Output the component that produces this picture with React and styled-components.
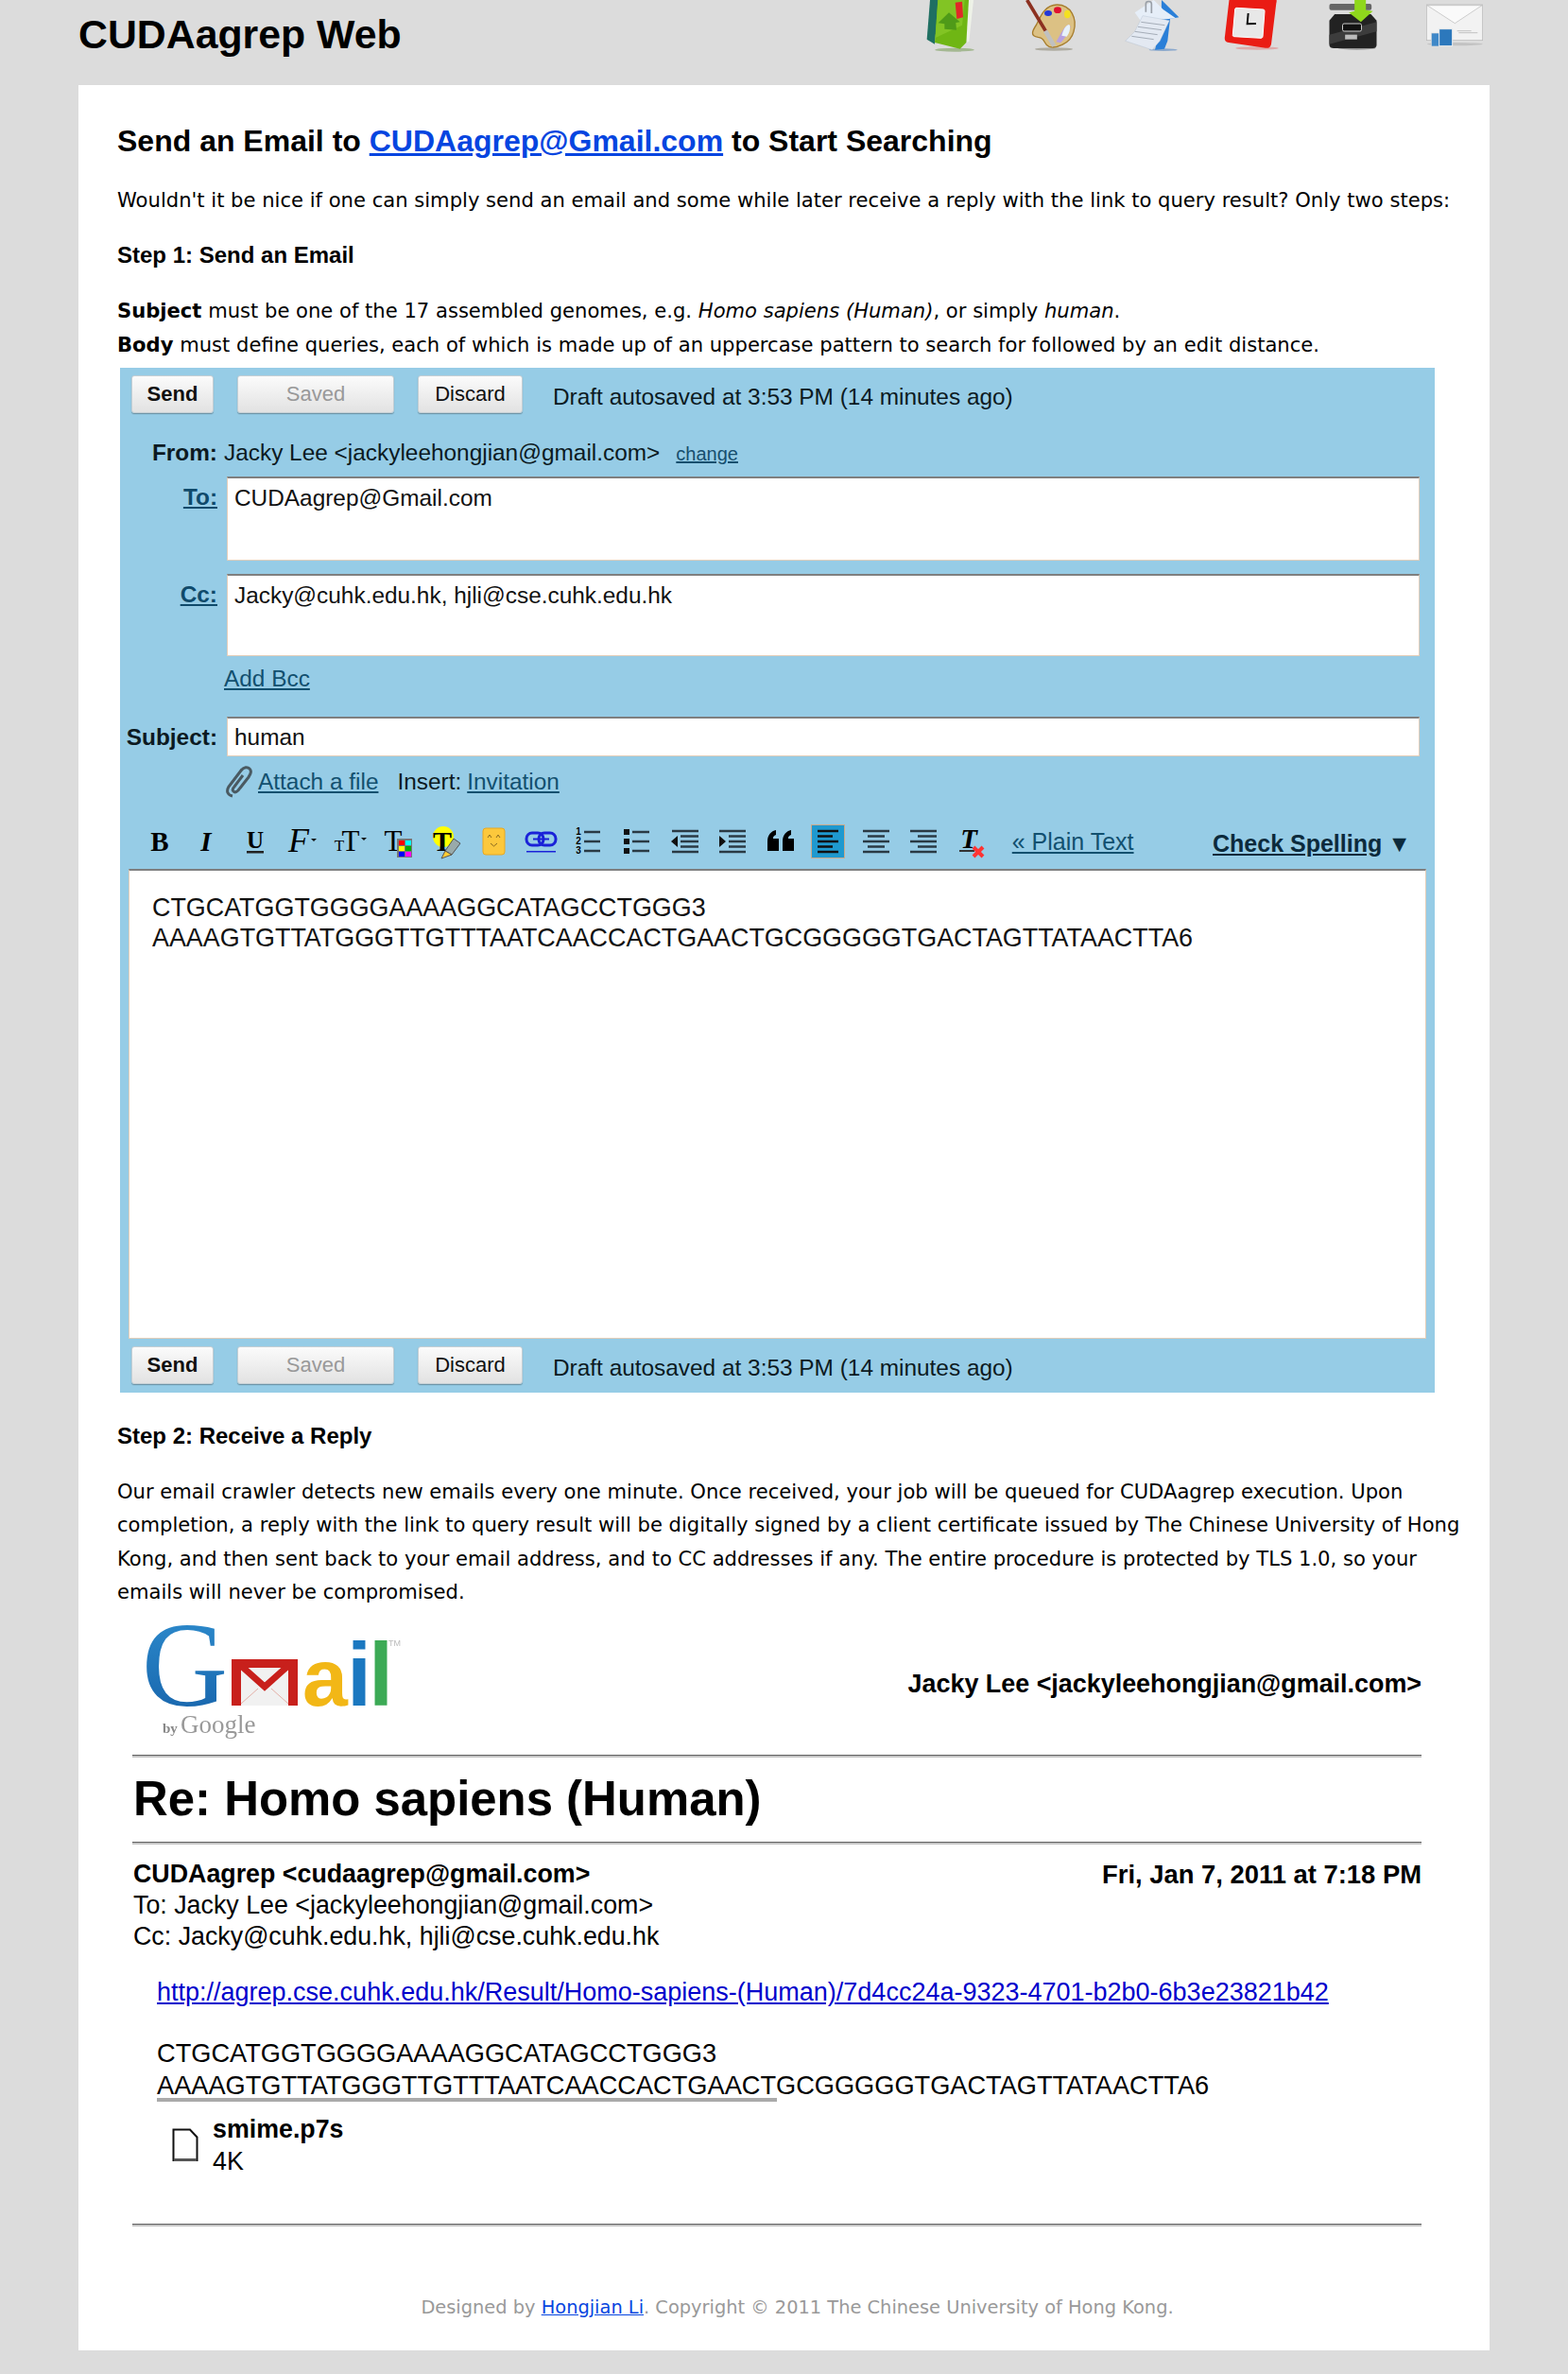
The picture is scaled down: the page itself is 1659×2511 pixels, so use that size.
import React from 'react';
import styled, { createGlobalStyle } from 'styled-components';

const GlobalStyle = createGlobalStyle`
  html, body { margin: 0; padding: 0; background: #dcdcdc; }
  body { font-family: "DejaVu Sans", Verdana, sans-serif; color: #000; }
`;

const Page = styled.div`
  width: 1493px;
  margin-left: 83px;
  padding-bottom: 26px;
`;

const Header = styled.header`
  height: 90px;
  display: flex;
  justify-content: space-between;
  align-items: flex-start;
  overflow: hidden;
`;

const SiteTitle = styled.h1`
  margin: 12px 0 0;
  font: bold 42.8px/48px "Liberation Sans", Arial, sans-serif;
`;

const NavIcons = styled.nav`
  display: flex;
  gap: 30.5px;
`;

const NavIcon = styled.svg`
  width: 76px;
  height: 56px;
  display: block;
  filter: blur(0.3px);
`;

const Card = styled.main`
  background: #fff;
  padding: 39px 26px 30px 41px;
`;

const Title = styled.h2`
  margin: 0 0 25px;
  font: bold 32px/40px "Liberation Sans", Arial, sans-serif;

  a { color: #0645e0; }
`;

const Text = styled.p`
  margin: 0 0 ${(p) => p.$gap}px;
  font-size: 21.1px;
  line-height: ${(p) => p.$line}px;
`;

const StepTitle = styled.h3`
  margin: 0 0 23px;
  font: bold 24px/36px "Liberation Sans", Arial, sans-serif;
`;

const Rules = styled.p`
  margin: 0 0 6px;
  font-size: 21.1px;
  line-height: 36px;
`;

/* the compose window */
const Compose = styled.section`
  width: 1391px;
  margin: 0 0 28px 3px;
  padding: 8px 0 9px;
  background: #96cce6;
  font: 24.4px/32px "Liberation Sans", Arial, sans-serif;
  color: #0c1a22;
`;

const ButtonBar = styled.div`
  display: flex;
  align-items: center;
  gap: 25px;
  margin-left: 12px;
`;

const Button = styled.div`
  width: ${(p) => p.$w}px;
  height: 40px;
  box-sizing: border-box;
  display: flex;
  align-items: center;
  justify-content: center;
  border: 1px solid #c3ced4;
  border-radius: 3px;
  background: linear-gradient(#fbfbfb, #e2e2e2);
  box-shadow: 0 1px 1px rgba(0, 0, 0, 0.3);
  font-size: 22px;
  font-weight: ${(p) => (p.$bold ? 'bold' : 'normal')};
  color: ${(p) => (p.$muted ? '#999' : '#111')};
`;

const Status = styled.span`
  margin: 6px 0 0 7px;
`;

const Field = styled.div`
  display: grid;
  grid-template-columns: 103px 1262px;
  column-gap: 10px;
  margin-top: ${(p) => p.$top}px;
`;

const Label = styled.label`
  text-align: right;
  font-weight: bold;
  margin-top: ${(p) => p.$offset || 0}px;
  text-decoration: ${(p) => (p.$link ? 'underline' : 'none')};
  color: ${(p) => (p.$link ? '#0f4a6b' : '#0c1a22')};
`;

const FromValue = styled.div`
  margin-left: -3px;
  white-space: nowrap;
`;

const Change = styled.a`
  margin-left: 17px;
  font-size: 20px;
  color: #174f6e;
  text-decoration: underline;
`;

const Input = styled.div`
  height: ${(p) => p.$h}px;
  box-sizing: border-box;
  padding: ${(p) => p.$pad || 5}px 7px 0;
  background: #fff;
  border: 1px solid #e2cdb9;
  border-top: 2px solid #7f7f7f;
  color: #111;
`;

const Links = styled.div`
  display: flex;
  align-items: center;
  margin: ${(p) => p.$top}px 0 0 110px;
  height: 28px;
`;

const PlainLink = styled.a`
  color: #12506f;
  text-decoration: underline;
`;

const Clip = styled.svg`
  width: 32px;
  height: 34px;
  margin-right: 4px;
  flex: none;
`;

const Insert = styled.span`
  margin: 0 6px 0 20px;
`;

const Toolbar = styled.div`
  display: flex;
  align-items: center;
  height: 38px;
  margin-top: 30px;
  padding: 0 25px 0 16.75px;
`;

const ToolCell = styled.span`
  width: 50.5px;
  height: 36px;
  flex: none;
  display: flex;
  justify-content: center;
  position: relative;
`;

const ActiveMark = styled.span`
  position: absolute;
  top: 0;
  left: 7px;
  width: 36px;
  height: 36px;
  box-sizing: border-box;
  background: #1f99cf;
  border: 1px solid #c9a98a;
`;

const ToolSvg = styled.svg`
  width: 36px;
  height: 36px;
  position: relative;
  overflow: visible;
`;

const PlainText = styled(PlainLink)`
  margin-left: 18px;
  font-size: 25px;
`;

const Spelling = styled.span`
  margin: 3px 0 0 auto;
  font-size: 25px;
  font-weight: bold;
  color: #0c2a3c;

  u { margin-right: 6px; }
`;

const Editor = styled.div`
  height: 497px;
  box-sizing: border-box;
  margin: 10px 9px 8px;
  padding: 23px 24px;
  background: #fff;
  border: 1px solid #e2cdb9;
  border-top: 2px solid #7f7f7f;
  font-size: 26.9px;
  line-height: 32px;
  color: #111;
`;

/* the received mail */
const Mail = styled.section`
  margin: 0 46px 0 16px;
  font: 26.8px/33px "Liberation Sans", Arial, sans-serif;
`;

const LogoRow = styled.div`
  height: 144px;
  padding-left: 5px;
  display: flex;
  justify-content: space-between;
  align-items: flex-start;
`;

const Logo = styled.svg`
  width: 290px;
  height: 155px;
  margin-top: -11px;
  filter: blur(0.6px);
`;

const Account = styled.b`
  margin-top: 64px;
  font-size: 26.9px;
  line-height: 32px;
`;

const Rule = styled.hr`
  margin: ${(p) => p.$top}px 0 0;
  height: 3px;
  border: 0;
  background: linear-gradient(#5f5f5f 45%, #c4c4c4 45%);
`;

const Subject = styled.h1`
  margin: 14px 0 0 1px;
  font: bold 50.9px/60px "Liberation Sans", Arial, sans-serif;
`;

const MailHead = styled.div`
  margin: 15px 0 0 1px;
`;

const SenderRow = styled.div`
  display: flex;
  justify-content: space-between;
  font-weight: bold;
`;

const MailDate = styled.span`
  font-size: 27.4px;
`;

const Body = styled.div`
  margin-left: 26px;
`;

const ResultLink = styled.a`
  display: block;
  margin-top: 26px;
  font-size: 27px;
  color: #0000cc;
  text-decoration: underline;
  white-space: nowrap;
`;

const Sequence = styled.div`
  margin-top: 31px;
  font-size: 27.2px;
  line-height: 34px;
  white-space: nowrap;
`;

const Cut = styled.div`
  width: 656px;
  height: 4px;
  margin-top: -4px;
  background: #aaa;
`;

const Attachment = styled.div`
  display: flex;
  margin: 12px 0 0 16px;
  line-height: 34px;
`;

const FileIcon = styled.svg`
  width: 28px;
  height: 36px;
  margin: 16px 15px 0 0;
`;

const FileName = styled.b`
  display: block;
`;

const Footer = styled.footer`
  margin-top: 71px;
  padding-left: 13px;
  text-align: center;
  font-size: 19.4px;
  line-height: 30px;
  color: #999;

  a { color: #0645e0; }
`;

const serif = '"Liberation Serif", serif';
const sans = '"Liberation Sans", sans-serif';

const Lines = ({ rows, color = '#2a3a44' }) => (
  <>
    {rows.map(([x1, x2, y], i) => (
      <line key={i} x1={x1} x2={x2} y1={y} y2={y} stroke={color} strokeWidth="2.500" />
    ))}
  </>
);

const Arrow = ({ x, y }) => <path d={`M${x} ${y}h6l-3 3z`} fill="#111" />;

const tools = [
  <text x="18" y="28" textAnchor="middle" fontFamily={serif} fontWeight="bold" fontSize="29">B</text>,
  <text x="16" y="28" textAnchor="middle" fontFamily={serif} fontWeight="bold" fontStyle="italic" fontSize="29">I</text>,
  <>
    <text x="18" y="25" textAnchor="middle" fontFamily={serif} fontWeight="bold" fontSize="25">U</text>
    <rect x="9" y="28" width="18" height="2.500" fill="#222" />
  </>,
  <>
    <text x="13" y="29" textAnchor="middle" fontFamily={serif} fontStyle="italic" fontSize="36">F</text>
    <Arrow x="26" y="15" />
  </>,
  <>
    <text x="6" y="28" textAnchor="middle" fontFamily={serif} fontSize="17">T</text>
    <text x="18" y="28" textAnchor="middle" fontFamily={serif} fontSize="31">T</text>
    <Arrow x="29" y="14" />
  </>,
  <>
    <text x="12" y="28" textAnchor="middle" fontFamily={serif} fontSize="31">T</text>
    <rect x="16" y="15" width="16" height="20" fill="#777" />
    <rect x="18" y="17" width="6" height="5" fill="#f00" />
    <rect x="25" y="17" width="6" height="5" fill="#0ff" />
    <rect x="18" y="23" width="6" height="5" fill="#ff0" />
    <rect x="25" y="23" width="6" height="5" fill="#0a0" />
    <rect x="18" y="29" width="6" height="5" fill="#00f" />
    <rect x="25" y="29" width="6" height="5" fill="#f0f" />
  </>,
  <>
    <circle cx="15" cy="13" r="11" fill="#ff0" />
    <text x="14" y="28" textAnchor="middle" fontFamily={serif} fontWeight="bold" fontSize="30">T</text>
    <path d="M26 15l7 5-9 12-7-4z" fill="#9aa" stroke="#555" />
    <path d="M13 36l4-8 7 4z" fill="#fc3" stroke="#555" />
  </>,
  <>
    <rect x="6" y="4" width="23" height="28" rx="3" fill="#fcc83c" stroke="#e8a820" />
    <path d="M11 14l2-3 2 3M20 14l2-3 2 3M14 20l3.500 3 3.500-3" fill="none" stroke="#8a6a20" />
  </>,
  <>
    <rect x="2" y="9" width="18" height="13" rx="6" fill="none" stroke="#1a22d8" strokeWidth="3" />
    <rect x="15" y="9" width="18" height="13" rx="6" fill="none" stroke="#1a22d8" strokeWidth="3" />
    <rect x="9" y="14.500" width="17" height="2" fill="#1a22d8" />
    <rect x="2" y="28" width="31" height="1.500" fill="#1a22d8" />
  </>,
  <>
    <text x="6" y="11" textAnchor="middle" fontFamily={sans} fontWeight="bold" fontSize="10">1</text>
    <text x="6" y="21" textAnchor="middle" fontFamily={sans} fontWeight="bold" fontSize="10">2</text>
    <text x="6" y="31" textAnchor="middle" fontFamily={sans} fontWeight="bold" fontSize="10">3</text>
    <Lines rows={[[12, 29, 8], [12, 29, 18], [12, 29, 28]]} />
  </>,
  <>
    <rect x="4" y="5" width="6" height="6" fill="#111" />
    <rect x="4" y="15" width="6" height="6" fill="#111" />
    <rect x="4" y="25" width="6" height="6" fill="#111" />
    <Lines rows={[[13, 31, 8], [13, 31, 18], [13, 31, 28]]} />
  </>,
  <>
    <path d="M3 18l7-6v12z" fill="#111" />
    <Lines rows={[[4, 32, 7], [13, 32, 12.500], [13, 32, 18], [13, 32, 23.500], [4, 32, 29]]} />
  </>,
  <>
    <path d="M11 18l-7-6v12z" fill="#111" />
    <Lines rows={[[4, 32, 7], [14, 32, 12.500], [14, 32, 18], [14, 32, 23.500], [4, 32, 29]]} />
  </>,
  <path d="M4 28v-10c0-7 4-11 9-12v5c-3 1-3 3-3 4h6v13zM20 28v-10c0-7 4-11 9-12v5c-3 1-3 3-3 4h6v13z" fill="#000" />,
  <Lines color="#111" rows={[[7, 29, 7], [7, 23, 12.500], [7, 29, 18], [7, 23, 23.500], [7, 29, 29]]} />,
  <Lines rows={[[4, 32, 7], [9, 27, 12.500], [4, 32, 18], [9, 27, 23.500], [4, 32, 29]]} />,
  <Lines rows={[[4, 32, 7], [12, 32, 12.500], [4, 32, 18], [12, 32, 23.500], [4, 32, 29]]} />,
  <>
    <text x="15" y="25" textAnchor="middle" fontFamily={serif} fontStyle="italic" fontWeight="bold" fontSize="29">T</text>
    <rect x="5" y="27" width="16" height="2" fill="#333" />
    <path d="M20 24l10 10M30 24l-10 10" stroke="#f33" strokeWidth="4" />
  </>,
];

const ActionButtons = () => (
  <ButtonBar>
    <Button $w={87} $bold>Send</Button>
    <Button $w={166} $muted>Saved</Button>
    <Button $w={111}>Discard</Button>
    <Status>Draft autosaved at 3:53 PM (14 minutes ago)</Status>
  </ButtonBar>
);

const GmailLogo = () => (
  <Logo viewBox="0 -20 290 155">
    <defs>
      <linearGradient id="gBlue" x1="0" y1="0" x2="0" y2="1">
        <stop offset="0" stopColor="#2f8fd0" />
        <stop offset="1" stopColor="#1560a8" />
      </linearGradient>
    </defs>
    <text x="5" y="94" fontFamily={serif} fontSize="126" fill="url(#gBlue)">G</text>
    <rect x="100" y="45" width="70" height="49" fill="#c8201c" />
    <path d="M110 54h50v40h-50z" fill="#f1f1f1" />
    <path d="M108 50l27 24 27-24" fill="none" stroke="#c8201c" strokeWidth="7" />
    <path d="M110 92l18-16M160 92l-18-16" stroke="#e4b0a8" strokeWidth="1" />
    <text x="175" y="94" fontFamily={sans} fontWeight="bold" fontSize="86" fill="#f2b716">a</text>
    <text x="222" y="94" fontFamily={sans} fontWeight="bold" fontSize="94" fill="#1b78c0">i</text>
    <text x="245" y="94" fontFamily={sans} fontWeight="bold" fontSize="94" fill="#3caa55">l</text>
    <text x="266" y="31" fontFamily={sans} fontSize="9" fill="#bbb">TM</text>
    <text x="27" y="123" fontFamily={serif} fontWeight="bold" fontSize="15" fill="#888">by</text>
    <text x="46" y="123" fontFamily={serif} fontSize="27" fill="#999">Google</text>
  </Logo>
);

const App = () => (
  <Page>
    <GlobalStyle />
    <Header>
      <SiteTitle>CUDAagrep Web</SiteTitle>
      <NavIcons>
        <NavIcon viewBox="-8 0 228 168">
          <ellipse cx="118" cy="158" rx="62" ry="6" fill="#7fa060" opacity="0.6" />
          <path d="M40 0L30 125l25 15L68 0z" fill="#1f6f62" />
          <path d="M150 0h28l-14 130-6 6z" fill="#eef2e8" />
          <path d="M65 0h98l-8 135-20 20-80-20z" fill="#6fb614" />
          <path d="M65 0h85l-8 80-85 40z" fill="#82c424" />
          <path d="M120 8l22-3 3 50-20 5z" fill="#e02828" />
          <path d="M100 40l35 30-13 2 2 23-38-3 0-16-20-3z" fill="#4f9a18" />
        </NavIcon>
        <NavIcon viewBox="312 0 228 168">
          <ellipse cx="435" cy="156" rx="60" ry="5" fill="#8f8a78" opacity="0.6" />
          <path d="M445 15C490 15 510 60 498 100 488 140 440 155 420 148 400 140 410 120 385 118 360 115 365 100 380 78 395 45 410 15 445 15z" fill="#dcc184" stroke="#a67c2c" strokeWidth="4" />
          <ellipse cx="417" cy="42" rx="12" ry="9" fill="#2438d8" />
          <ellipse cx="447" cy="32" rx="12" ry="10" fill="#e01030" />
          <ellipse cx="478" cy="45" rx="10" ry="13" fill="#f4e020" />
          <path d="M482 78c-15 5-25 30-40 55l14 3c15-15 28-35 32-52z" fill="#b8a0e0" />
          <path d="M482 78c-12 5-18 20-22 35l16 3c8-10 12-25 10-36z" fill="#e8f2fa" />
          <path d="M350 0l60 100" stroke="#8c3020" strokeWidth="11" />
          <path d="M408 98l28 48" stroke="#c0c0c0" strokeWidth="14" />
        </NavIcon>
        <NavIcon viewBox="631 0 228 168">
          <ellipse cx="780" cy="158" rx="45" ry="4" fill="#8aa8cc" />
          <path d="M775 0l55 55-28 5-8 70-10 25-30 3 20-90z" fill="#2a7fd8" />
          <path d="M690 40l60-40 30 30 40 28-110 10z" fill="#e6eef8" />
          <path d="M715 50l85 15-30 65-25 28-85-28 30-30z" fill="#e3e9f2" stroke="#a8b6c8" />
          <path d="M710 70l75 10M700 85l75 10M690 100l72 10M680 115l70 10" stroke="#a5adb8" strokeWidth="3" />
          <path d="M725 38V12c0-10 18-10 18 0v30" fill="none" stroke="#9aa0a8" strokeWidth="5" />
        </NavIcon>
        <NavIcon viewBox="21 0 228 168">
          <ellipse cx="150" cy="153" rx="68" ry="5" fill="#d88" opacity="0.6" />
          <path d="M62 -5H205c8 0 8 8 6 15L195 140c-2 10-10 14-18 12L60 135c-12-2-14-10-12-20z" fill="#ea1c14" />
          <path d="M85 25l85 5c3 0 4 3 4 6l-6 80c0 3-3 5-6 5l-85-5c-3 0-5-3-4-6l7-80c0-3 2-5 5-5z" fill="#e8e8e8" stroke="#fff" strokeWidth="3" />
          <path d="M122 42l-3 34 28-1" fill="none" stroke="#111" strokeWidth="6" />
        </NavIcon>
        <NavIcon viewBox="340.5 0 228 168">
          <ellipse cx="465" cy="152" rx="60" ry="6" fill="#666" opacity="0.6" />
          <rect x="378" y="12" width="134" height="20" rx="6" fill="#666" />
          <path d="M395 45h115l18 20v78c0 6-5 10-12 10H392c-8 0-14-4-14-10V65z" fill="#222" />
          <path d="M378 110L528 70v30L378 140z" fill="#3c3c3c" />
          <path d="M458 0h36v32l22 3-38 35-38-30 18-5z" fill="#8fd71c" />
          <rect x="420" y="75" width="60" height="24" rx="5" fill="#111" stroke="#ccc" strokeWidth="3" />
          <rect x="428" y="110" width="38" height="15" fill="#bbb" />
        </NavIcon>
        <NavIcon viewBox="660 0 228 168">
          <ellipse cx="778" cy="140" rx="88" ry="5" fill="#c2c2c2" />
          <rect x="688" y="15" width="178" height="113" fill="#f2f2f2" stroke="#b6b6b6" strokeWidth="2" />
          <path d="M690 17h174l-86 57z" fill="#fafafa" stroke="#b6b6b6" strokeWidth="2" />
          <path d="M785 98h45M790 104h60" stroke="#aaa" strokeWidth="2" />
          <rect x="703" y="105" width="32" height="42" fill="#3f88c8" stroke="#ddd" strokeWidth="2" />
          <rect x="728" y="92" width="42" height="54" fill="#2c78bc" stroke="#eee" strokeWidth="3" />
        </NavIcon>
      </NavIcons>
    </Header>
    <Card>
      <Title>Send an Email to <a href="#mail">CUDAagrep@Gmail.com</a> to Start Searching</Title>
      <Text $line={36} $gap={22}>Wouldn't it be nice if one can simply send an email and some while later receive a reply with the link to query result? Only two steps:</Text>
      <StepTitle>Step 1: Send an Email</StepTitle>
      <Rules>
        <b>Subject</b> must be one of the 17 assembled genomes, e.g. <i>Homo sapiens (Human)</i>, or simply <i>human</i>.<br />
        <b>Body</b> must define queries, each of which is made up of an uppercase pattern to search for followed by an edit distance.
      </Rules>
      <Compose>
        <ActionButtons />
        <Field $top={26}>
          <Label>From:</Label>
          <FromValue>Jacky Lee &lt;jackyleehongjian@gmail.com&gt;<Change>change</Change></FromValue>
        </Field>
        <Field $top={8}>
          <Label $link $offset={6}>To:</Label>
          <Input $h={89}>CUDAagrep@Gmail.com</Input>
        </Field>
        <Field $top={14}>
          <Label $link $offset={6}>Cc:</Label>
          <Input $h={87}>Jacky@cuhk.edu.hk, hjli@cse.cuhk.edu.hk</Input>
        </Field>
        <Links $top={10}><PlainLink>Add Bcc</PlainLink></Links>
        <Field $top={26}>
          <Label $offset={6}>Subject:</Label>
          <Input $h={42} $pad={4}>human</Input>
        </Field>
        <Links $top={13}>
          <Clip viewBox="0 0 32 34">
            <path d="M9 32c-5-1-7-5-4-10L18 5c3-4 7-4 9-2s2 5-1 9L15 26c-2 2-4 2-5 1s-1-3 1-5l9-12" fill="none" stroke="#4a5a62" strokeWidth="3" />
          </Clip>
          <PlainLink>Attach a file</PlainLink>
          <Insert>Insert:</Insert>
          <PlainLink>Invitation</PlainLink>
        </Links>
        <Toolbar>
          {tools.map((tool, i) => (
            <ToolCell key={i}>
              {i === 14 && <ActiveMark />}
              <ToolSvg viewBox="0 0 36 36">{tool}</ToolSvg>
            </ToolCell>
          ))}
          <PlainText>« Plain Text</PlainText>
          <Spelling><u>Check Spelling</u>▼</Spelling>
        </Toolbar>
        <Editor>
          CTGCATGGTGGGGAAAAGGCATAGCCTGGG3<br />
          AAAAGTGTTATGGGTTGTTTAATCAACCACTGAACTGCGGGGGTGACTAGTTATAACTTA6
        </Editor>
        <ActionButtons />
      </Compose>
      <StepTitle>Step 2: Receive a Reply</StepTitle>
      <Text $line={35.3} $gap={0}>
        Our email crawler detects new emails every one minute. Once received, your job will be queued for CUDAagrep execution. Upon completion, a reply with the link to query result will be digitally signed by a client certificate issued by The Chinese University of Hong Kong, and then sent back to your email address, and to CC addresses if any. The entire procedure is protected by TLS 1.0, so your emails will never be compromised.
      </Text>
      <Mail>
        <LogoRow>
          <GmailLogo />
          <Account>Jacky Lee &lt;jackyleehongjian@gmail.com&gt;</Account>
        </LogoRow>
        <Rule $top={11} />
        <Subject>Re: Homo sapiens (Human)</Subject>
        <Rule $top={15} />
        <MailHead>
          <SenderRow>
            <span>CUDAagrep &lt;cudaagrep@gmail.com&gt;</span>
            <MailDate>Fri, Jan 7, 2011 at 7:18 PM</MailDate>
          </SenderRow>
          <div>To: Jacky Lee &lt;jackyleehongjian@gmail.com&gt;</div>
          <div>Cc: Jacky@cuhk.edu.hk, hjli@cse.cuhk.edu.hk</div>
        </MailHead>
        <Body>
          <ResultLink>http://agrep.cse.cuhk.edu.hk/Result/Homo-sapiens-(Human)/7d4cc24a-9323-4701-b2b0-6b3e23821b42</ResultLink>
          <Sequence>
            CTGCATGGTGGGGAAAAGGCATAGCCTGGG3<br />
            AAAAGTGTTATGGGTTGTTTAATCAACCACTGAACTGCGGGGGTGACTAGTTATAACTTA6
          </Sequence>
          <Cut />
          <Attachment>
            <FileIcon viewBox="0 0 28 36">
              <path d="M1.500 1.500H19l7.500 8v24.500H1.500z" fill="#fff" stroke="#111" strokeWidth="2" />
              <path d="M2 32h24v3H2z" fill="#555" />
            </FileIcon>
            <div>
              <FileName>smime.p7s</FileName>
              4K
            </div>
          </Attachment>
        </Body>
        <Rule $top={49} />
      </Mail>
      <Footer>Designed by <a href="#author">Hongjian Li</a>. Copyright © 2011 The Chinese University of Hong Kong.</Footer>
    </Card>
  </Page>
);

export default App;
